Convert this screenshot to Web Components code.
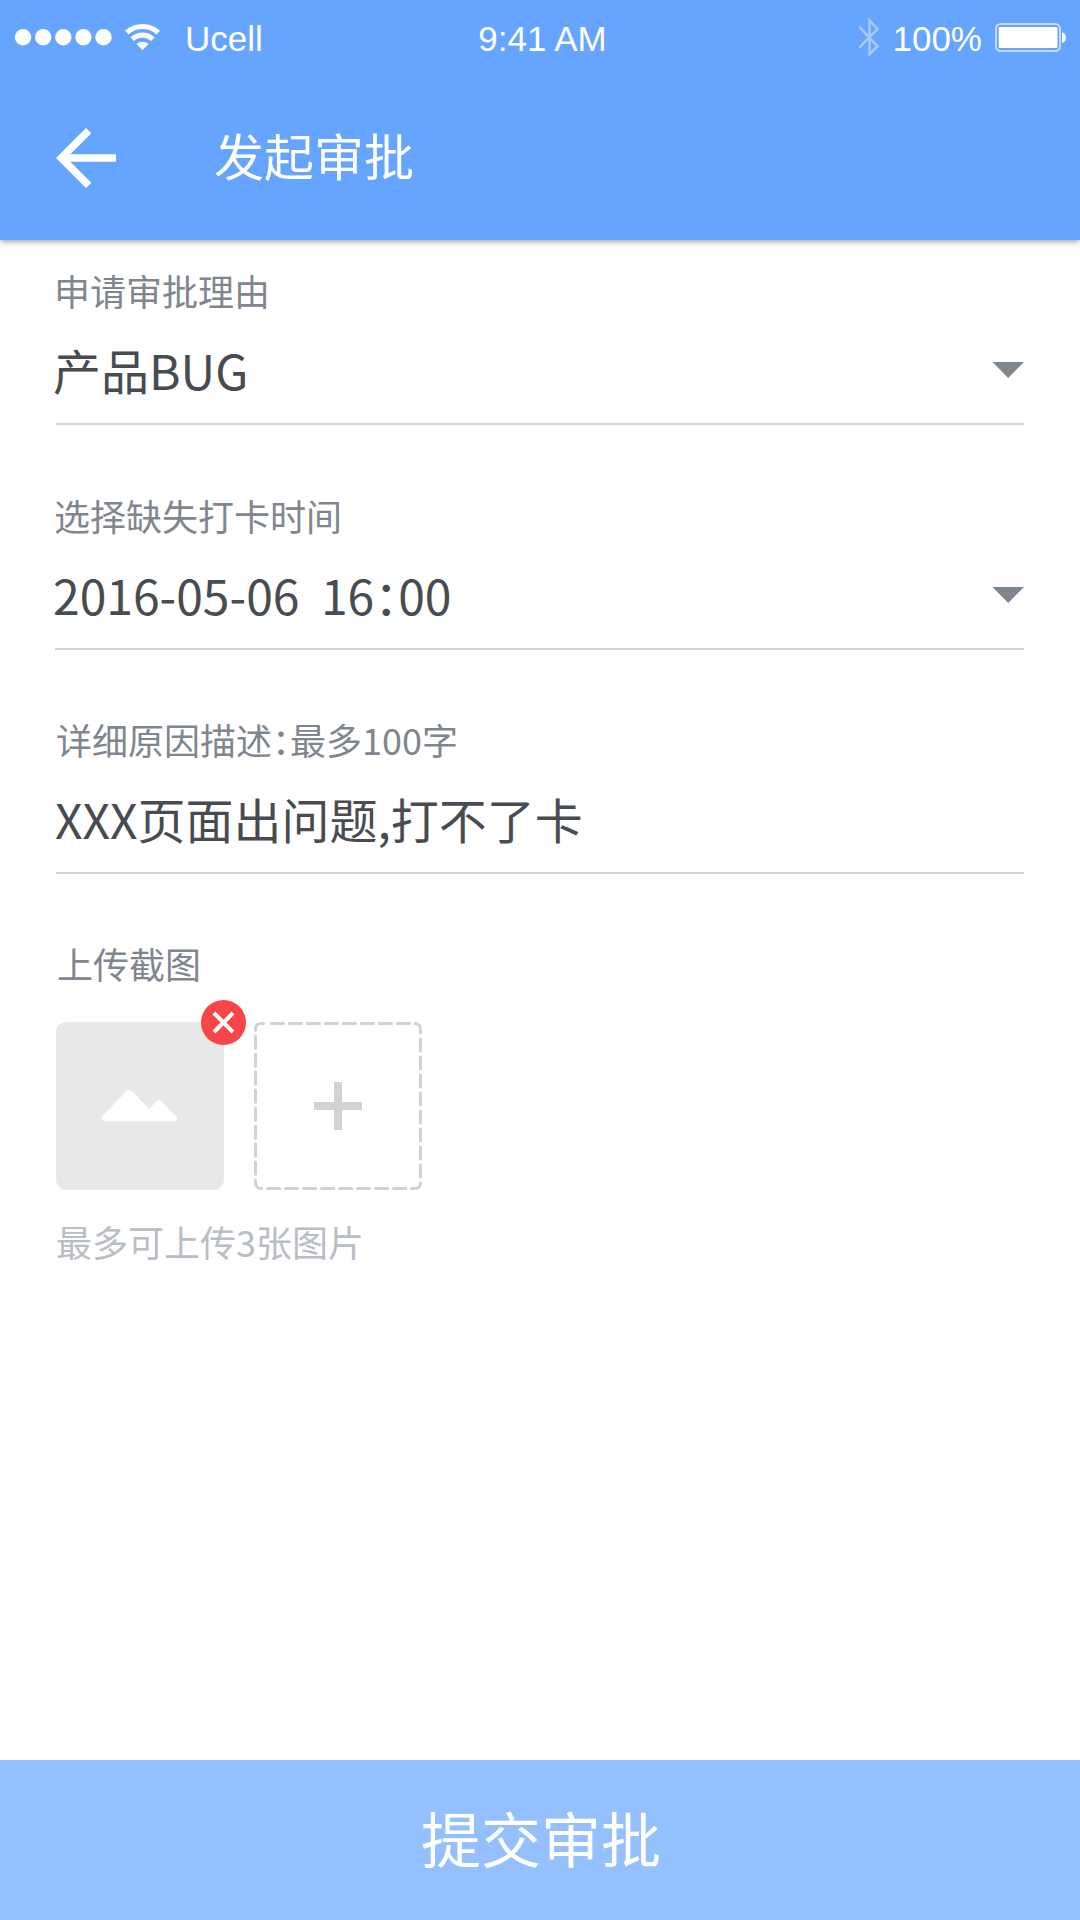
<!DOCTYPE html>
<html lang="zh-CN">
<head>
<meta charset="utf-8">
<title>发起审批</title>
<style>
html,body{margin:0;padding:0}
body{width:1080px;height:1920px;background:#fff;overflow:hidden;font-family:"Noto Sans CJK SC",sans-serif;font-weight:400}
</style>
</head>
<body>
<approval-page></approval-page>
<script>
function define(name, html) {
  const template = document.createElement('template');
  template.innerHTML = html;
  customElements.define(name, class extends HTMLElement {
    constructor() {
      super();
      this.attachShadow({ mode: 'open' }).append(template.content.cloneNode(true));
    }
  });
}

define('status-bar', `
<style>
:host{display:grid;grid-template-columns:1fr auto 1fr;align-items:center;height:76px;color:#fff;font:35px/40px "Liberation Sans",sans-serif;white-space:pre}
.left,.right{display:flex;align-items:center}
.right{justify-content:flex-end}
svg{display:block;flex:none}
.carrier{margin-left:25px;padding-top:1px}
.time{padding:1px 0 0 5px}
.power{margin:1px 12px 0 11px}
</style>
<div class="left">
  <svg width="160" height="76" viewBox="0 0 160 76" fill="#fff">
    <circle cx="23" cy="37.3" r="8.2"/><circle cx="43.2" cy="37.3" r="8.2"/><circle cx="63.3" cy="37.3" r="8.2"/><circle cx="83.4" cy="37.3" r="8.2"/><circle cx="103.5" cy="37.3" r="8.2"/>
    <g fill="none" stroke="#fff" stroke-width="5.2"><path d="M126.800 32.600a23.200 23.200 0 0 1 31.400 0"/><path d="M132.200 39.200a15 15 0 0 1 20.600 0"/></g>
    <path d="M136.500 43.900a9.200 9.200 0 0 1 12 0L142.500 50z"/>
  </svg>
  <span class="carrier">Ucell</span>
</div>
<span class="time">9:41 AM</span>
<div class="right">
  <svg width="22" height="76" viewBox="0 0 22 76" fill="none" stroke="#fff" stroke-opacity=".42" stroke-width="2.500"><path d="M0 26.500L18.500 46.500L10.500 54V20.500L18.500 29L0 48"/></svg>
  <span class="power">100%</span>
  <svg width="86" height="76" viewBox="994 0 86 76"><rect x="996" y="24" width="64" height="27" rx="4.500" fill="none" stroke="#fff" stroke-opacity=".8" stroke-width="1.500"/><rect x="998.700" y="27" width="58.800" height="21" rx="1.200" fill="#fff"/><path d="M1062 32.300c5.200 1 5.200 9.700 0 10.700z" fill="#fff"/></svg>
</div>`);

define('title-bar', `
<style>
:host{display:flex;align-items:center;height:164px}
.icon{margin-left:41px}
svg{display:block}
.title{margin:-8px 0 0 83px;font-size:50px;line-height:60px;color:#fff}
</style>
<div class="icon"><svg width="90" height="90" viewBox="0 0 24 24" fill="#fff"><path d="M20 11H7.830l5.590-5.590L12 4l-8 8 8 8 1.410-1.410L7.830 13H20z"/></svg></div>
<div class="title"><slot></slot></div>`);

define('app-header', `
<style>:host{display:block;height:240px;background:#66a5ff;box-shadow:0 2px 6px rgba(0,0,0,.36);position:relative}</style>
<slot></slot>`);

define('form-field', `
<style>
:host{display:flex;flex-direction:column;border-bottom:2px solid #d1d5da;height:152px;white-space:pre;font-feature-settings:"halt"}
.label{font-size:36px;line-height:36px;color:#7f868e;margin:1px 0 -1px var(--label-x,0px)}
.row{display:flex;align-items:center;justify-content:space-between;margin-top:37px;height:48px}
.value{font-size:48px;line-height:48px;color:#484b50;margin:2px 0 0 var(--value-x,0px)}
svg{display:none;margin-top:4px}
:host([select]) svg{display:block}
</style>
<div class="label"><slot name="label"></slot></div>
<div class="row"><div class="value"><slot></slot></div>
<svg width="32" height="16" viewBox="0 0 32 16"><path d="M.5 0H32L16.200 16z" fill="#7f868e"/></svg></div>`);

define('image-thumb', `
<style>
:host{display:block;position:relative;width:168px;height:168px;border-radius:10px;background:#e8e8e8}
svg{display:block}
.remove{position:absolute;left:145px;top:-22px}
</style>
<svg width="168" height="168" viewBox="0 0 168 168"><path d="M49 99.200C46 99.200 45 96 47 93.500L69.500 70Q72.800 66 76.500 69.500L93 87L99.500 80Q103 76 106.500 80L120 94.500C122.500 97 121 99.200 118.500 99.200Z" fill="#fff"/></svg>
<svg class="remove" width="45" height="45" viewBox="0 0 45 45"><circle cx="22.500" cy="22.500" r="22.500" fill="#f74648"/><path d="M13 13l19 19M32 13L13 32" stroke="#fff" stroke-width="4"/></svg>`);

define('image-add', `
<style>:host{display:block;width:168px;height:168px}svg{display:block}</style>
<svg width="168" height="168" viewBox="0 0 168 168" fill="none" stroke="#d2d2d2" stroke-width="3" stroke-linecap="round">
  <path d="M17.200 1.500H160.500Q166.500 1.500 166.500 7.500V160.500Q166.500 166.500 160.500 166.500H7.500Q1.500 166.500 1.500 160.500V7.500Q1.500 1.500 7.500 1.500H13" stroke-dasharray="12.300 5.700"/>
  <path d="M84 60V108M60 84H108" stroke-width="8" stroke-linecap="butt"/>
</svg>`);

define('image-upload', `
<style>
:host{display:block;font-size:36px;line-height:36px}
.label{color:#7f868e;margin:1px 0 -1px 1px}
.tiles{display:flex;gap:30px;margin-top:42px}
.hint{color:#b9bdc4;margin:33px 0 0 0}
</style>
<div class="label"><slot name="label"></slot></div>
<div class="tiles"><slot></slot></div>
<div class="hint"><slot name="hint"></slot></div>`);

define('submit-button', `
<style>:host{display:flex;align-items:center;justify-content:center;height:160px;background:#95c0ff;color:#fff;font-size:60px;line-height:80px}span{margin:-6px 0 0 2px}</style>
<span><slot></slot></span>`);

define('approval-page', `
<style>
:host{display:flex;flex-direction:column;width:1080px;height:1920px}
main{flex:1;display:flex;flex-direction:column;padding:31px 56px 0}
.reason{--label-x:-2px;--value-x:-3px}
.time{margin-top:71px;margin-left:-1px;--label-x:-1px;--value-x:-2px}
.detail{margin-top:70px;--value-x:-1px}
.upload{margin-top:70px}
</style>
<app-header><status-bar></status-bar><title-bar>发起审批</title-bar></app-header>
<main>
  <form-field class="reason" select><span slot="label">申请审批理由</span>产品BUG</form-field>
  <form-field class="time" select><span slot="label">选择缺失打卡时间</span>2016-05-06  16：00</form-field>
  <form-field class="detail"><span slot="label">详细原因描述：最多100字</span>XXX页面出问题,打不了卡</form-field>
  <image-upload class="upload"><span slot="label">上传截图</span><image-thumb></image-thumb><image-add></image-add><span slot="hint">最多可上传3张图片</span></image-upload>
</main>
<submit-button>提交审批</submit-button>`);
</script>
</body>
</html>
